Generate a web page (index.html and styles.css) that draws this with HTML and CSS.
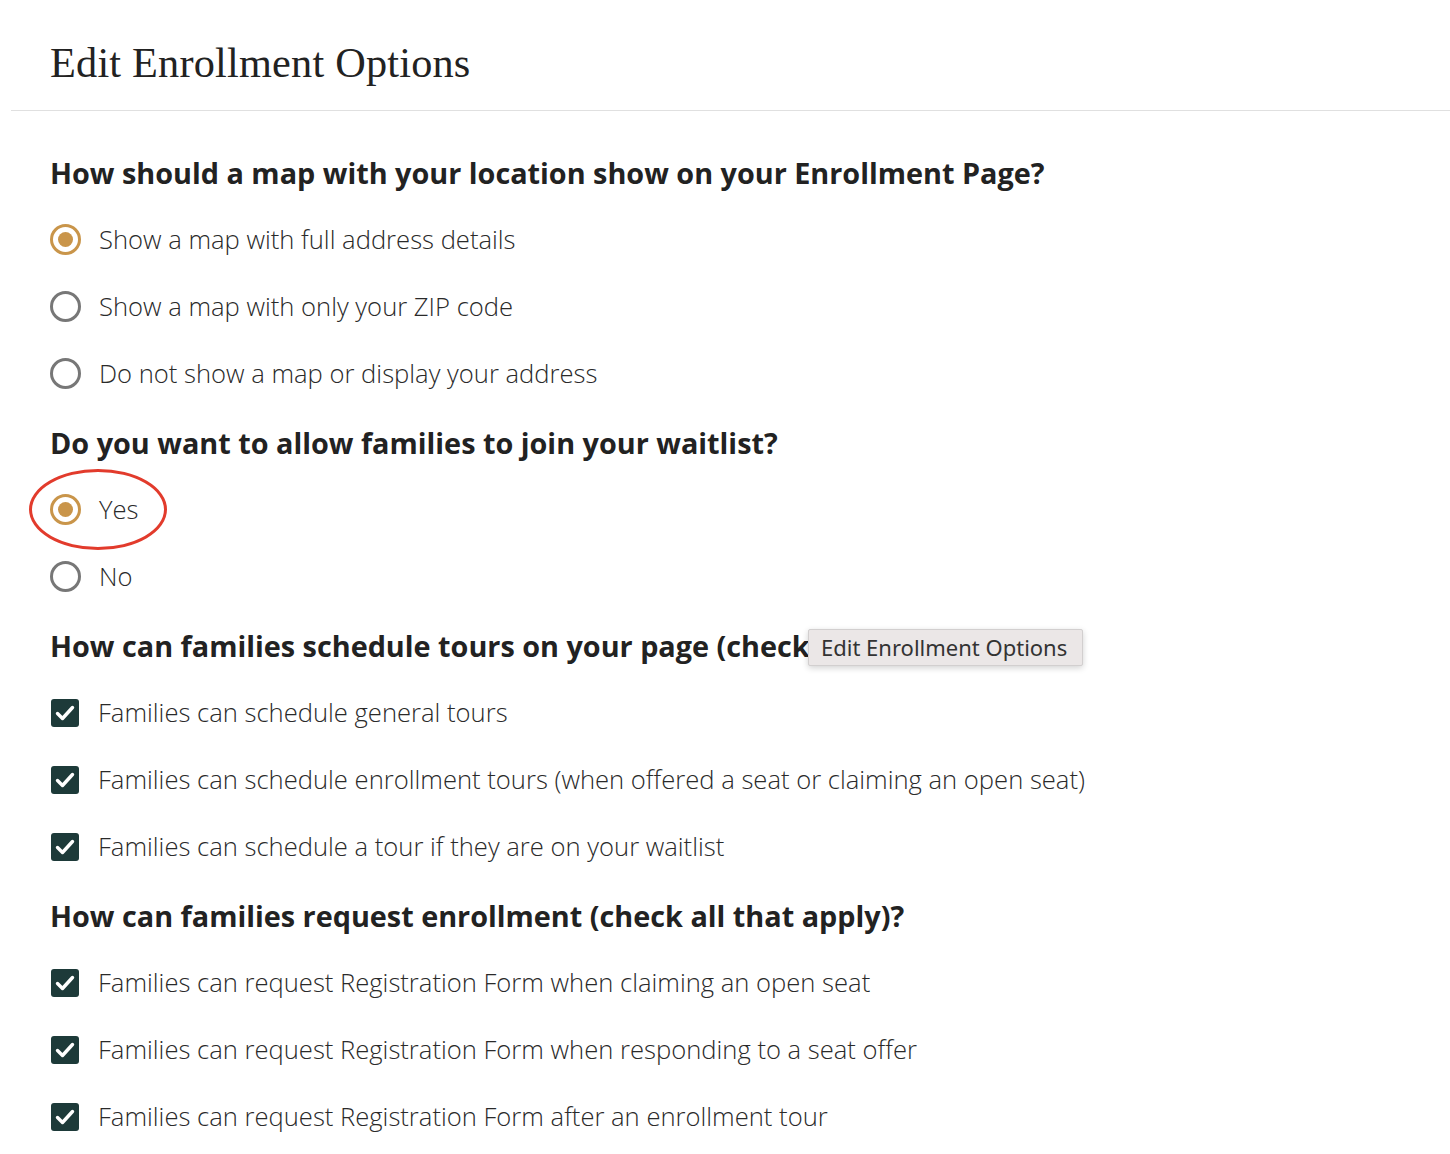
FILE: index.html
```html
<!DOCTYPE html>
<html lang="en">
<head>
<meta charset="utf-8">
<title>Edit Enrollment Options</title>
<link rel="stylesheet" href="styles.css">
</head>
<body>
<div class="page">
  <header class="header">
    <h1 class="title">Edit Enrollment Options</h1>
  </header>
  <main class="content">
    <section class="group">
      <h2 class="question">How should a map with your location show on your Enrollment Page?</h2>
      <div class="option"><span class="radio checked"></span><span class="label">Show a map with full address details</span></div>
      <div class="option"><span class="radio"></span><span class="label">Show a map with only your ZIP code</span></div>
      <div class="option"><span class="radio"></span><span class="label">Do not show a map or display your address</span></div>
    </section>
    <section class="group">
      <h2 class="question">Do you want to allow families to join your waitlist?</h2>
      <div class="option highlight-wrap"><span class="radio checked"></span><span class="label">Yes</span><span class="highlight"></span></div>
      <div class="option"><span class="radio"></span><span class="label">No</span></div>
    </section>
    <section class="group">
      <h2 class="question tip-wrap">How can families schedule tours on your page (check<span class="tooltip">Edit Enrollment Options</span></h2>
      <div class="option"><span class="check"><svg viewBox="0 0 28 28" width="28" height="28"><path d="M6.5 14.5l5 5L21.5 8.5" fill="none" stroke="#fff" stroke-width="3.4" stroke-linecap="round" stroke-linejoin="round"/></svg></span><span class="label">Families can schedule general tours</span></div>
      <div class="option"><span class="check"><svg viewBox="0 0 28 28" width="28" height="28"><path d="M6.5 14.5l5 5L21.5 8.5" fill="none" stroke="#fff" stroke-width="3.4" stroke-linecap="round" stroke-linejoin="round"/></svg></span><span class="label">Families can schedule enrollment tours (when offered a seat or claiming an open seat)</span></div>
      <div class="option"><span class="check"><svg viewBox="0 0 28 28" width="28" height="28"><path d="M6.5 14.5l5 5L21.5 8.5" fill="none" stroke="#fff" stroke-width="3.4" stroke-linecap="round" stroke-linejoin="round"/></svg></span><span class="label">Families can schedule a tour if they are on your waitlist</span></div>
    </section>
    <section class="group">
      <h2 class="question">How can families request enrollment (check all that apply)?</h2>
      <div class="option"><span class="check"><svg viewBox="0 0 28 28" width="28" height="28"><path d="M6.5 14.5l5 5L21.5 8.5" fill="none" stroke="#fff" stroke-width="3.4" stroke-linecap="round" stroke-linejoin="round"/></svg></span><span class="label">Families can request Registration Form when claiming an open seat</span></div>
      <div class="option"><span class="check"><svg viewBox="0 0 28 28" width="28" height="28"><path d="M6.5 14.5l5 5L21.5 8.5" fill="none" stroke="#fff" stroke-width="3.4" stroke-linecap="round" stroke-linejoin="round"/></svg></span><span class="label">Families can request Registration Form when responding to a seat offer</span></div>
      <div class="option"><span class="check"><svg viewBox="0 0 28 28" width="28" height="28"><path d="M6.5 14.5l5 5L21.5 8.5" fill="none" stroke="#fff" stroke-width="3.4" stroke-linecap="round" stroke-linejoin="round"/></svg></span><span class="label">Families can request Registration Form after an enrollment tour</span></div>
    </section>
  </main>
</div>
</body>
</html>
```
FILE: styles.css
```css
* { box-sizing: border-box; }
html, body { margin: 0; padding: 0; background: #fff; }
body { font-family: "Open Sans", "Noto Sans", sans-serif; color: #222; }
.page { width: 1450px; }
.header {
  margin-left: 11px;
  height: 111px;
  border-bottom: 1px solid #e0e0e0;
  padding: 37px 0 0 39px;
}
.title {
  margin: 0;
  font-family: "Liberation Serif", "DejaVu Serif", serif;
  font-weight: 400;
  font-size: 42.3px;
  line-height: 52px;
  color: #222;
  letter-spacing: 0.2px;
}
.content { padding: 26px 0 0 50px; display: flex; flex-direction: column; }
.group { display: flex; flex-direction: column; margin-top: 16px; }
.question {
  margin: 0 0 13px;
  font-size: 28.8px;
  line-height: 40px;
  font-weight: 700;
  color: #222;
  white-space: nowrap;
}
.option {
  height: 67px;
  display: flex;
  align-items: center;
  gap: 17px;
}
.label {
  font-size: 25.6px;
  font-weight: 300;
  color: #2a2a2a;
  line-height: 32px;
}
.radio {
  width: 31px; height: 31px;
  border-radius: 50%;
  border: 3px solid #777;
  flex: none;
  margin-right: 1px;
  display: flex; align-items: center; justify-content: center;
}
.radio.checked { border-color: #c9954a; }
.radio.checked::after {
  content: "";
  width: 15px; height: 15px; border-radius: 50%;
  background: #c9954a;
}
.check {
  width: 28px; height: 28px;
  margin: 0 2px 0 1px;
  border-radius: 3px;
  background: #1d3a39;
  flex: none;
  display: flex;
}
.highlight-wrap { position: relative; }
.highlight {
  position: absolute;
  left: -21px; top: -7px;
  width: 138px; height: 81px;
  border: 3px solid #e23b2c;
  border-radius: 50%;
}
.tip-wrap { position: relative; }
.tooltip {
  position: absolute;
  left: 758px; top: 3px;
  width: 275px;
  height: 37px;
  padding: 0 0 0 12px;
  background: #ebe7e7;
  border: 1px solid #d2cfcf;
  border-radius: 2px;
  box-shadow: 0 2px 6px rgba(0,0,0,0.18);
  font-family: "Noto Sans", "Open Sans", sans-serif;
  font-weight: 400;
  font-size: 22px;
  line-height: 35px;
  color: #333;
  display: flex; align-items: center;
}
```
